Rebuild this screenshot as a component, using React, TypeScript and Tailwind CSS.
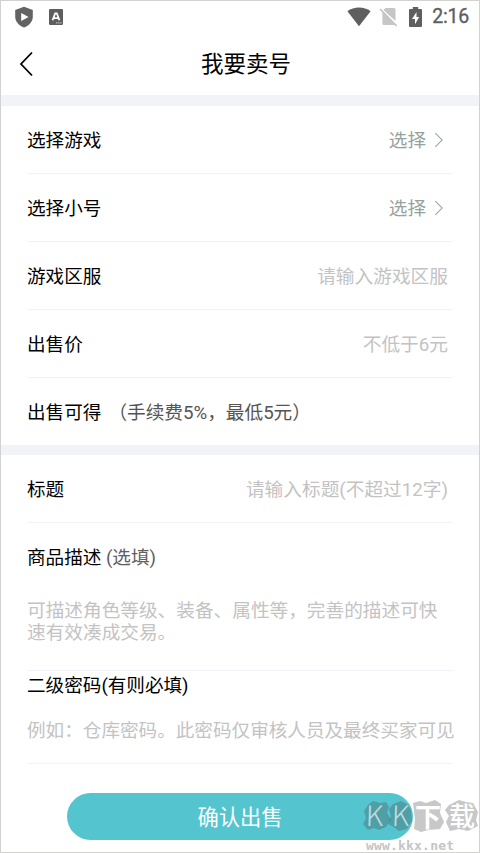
import React from "react";

function StatusBar() {
  return (
    <div className="flex h-[31px] shrink-0 items-center justify-between pl-[13px] pr-[10px] text-[#5f5f5f]">
      <div className="flex items-center gap-[15px]">
        <svg width="20" height="22" viewBox="0 0 20 22">
          <path d="M10 .8 18.8 4V10.5C18.8 15.7 15 19.8 10 21.5 5 19.8 1.2 15.7 1.2 10.5V4Z" fill="#636363" />
          <path d="M7.2 7v8l7.3-4Z" fill="#fff" />
        </svg>
        <svg width="14" height="16" viewBox="0 0 14 16">
          <rect width="14" height="16" rx="1.2" fill="#5e5e5e" />
          <path d="M3.6 11.3 6.2 4.3h1.6l2.6 7M4.6 9.2h4.8" fill="none" stroke="#fff" strokeWidth="1.8" />
          <path d="M7 13.9h6" stroke="#ccc" strokeWidth="1" strokeDasharray="1.5 .6" />
        </svg>
      </div>
      <div className="flex items-center">
        <svg width="24" height="20" viewBox="0 0 24 20">
          <path d="M.4 4.2C7-.6 17-.6 23.6 4.2L12 19.2Z" fill="#5f5f5f" />
        </svg>
        <svg className="ml-[8px]" width="19" height="20" viewBox="0 0 19 20">
          <path d="M6.5 1H15q1.5 0 1.5 1.5V14L4.4 2.9ZM3.4 5.2 16 18H5q-1.6 0-1.6-1.5Z" fill="#c6c6c6" />
          <path d="M1 2 17.7 19" stroke="#bcbcbc" strokeWidth="1.4" />
        </svg>
        <svg className="ml-[11px]" width="13" height="20" viewBox="0 0 13 20">
          <path d="M3.8 0h5.4v2H12q1 0 1 1v16q0 1-1 1H1q-1 0-1-1V3q0-1 1-1h2.8Z" fill="#5f5f5f" />
          <path d="M7.5 5 3 12h3v5.2L10.2 10H7.5Z" fill="#fff" />
        </svg>
        <span className="ml-[10px] text-[19.5px] leading-[22px] tracking-[-0.2px] [-webkit-text-stroke:0.35px_#5f5f5f]">2:16</span>
      </div>
    </div>
  );
}

function Row({ label, last, children }: { label: string; last?: boolean; children: React.ReactNode }) {
  return (
    <div className={`mx-[26px] flex h-[68px] items-center justify-between ${last ? "pt-px" : "border-b border-[#f2f2f8] pt-[2px]"}`}>
      <span className="whitespace-nowrap">{label}</span>
      {children}
    </div>
  );
}

function Choose() {
  return (
    <div className="flex items-center pr-[9px] text-[#95a39e]">
      <span>选择</span>
      <svg className="-mt-[2px] ml-[8px]" width="10" height="16" viewBox="0 0 10 16" fill="none">
        <path d="M1.3 1.2 8.2 8l-6.9 6.8" stroke="#9caba6" strokeWidth="1.1" />
      </svg>
    </div>
  );
}

function Hint({ children }: { children: React.ReactNode }) {
  return <span className="pr-[5px] text-[18.7px] whitespace-nowrap text-[#c3c3c3]">{children}</span>;
}

function Watermark() {
  return (
    <div className="pointer-events-none absolute -right-px -bottom-px h-[58px] w-[120px]">
      <svg width="120" height="58" viewBox="0 0 120 58">
        <g fill="#484848" fillOpacity=".3">
          <path d="M8 10 13 6 20 8 26 7 29 12 27 18 31 24 26 32 19 35 14 33 8 35 3 29 6 23 4 16Z" />
          <path d="M33 9 41 6 47 9 51 15 52 26 47 34 39 36 34 32 28 29 31 21 29 14Z" />
          <path d="M53 8 60 6 66 8 75 5 81 9 80 18 84 27 80 34 68 35 61 37 54 34 55 24Z" />
          <path d="M89 10 99 5 106 7 113 8 118 17 116 25 118 31 108 36 99 34 90 36 86 27 89 21 85 15Z" />
        </g>
        <g fill="#fff" fontFamily="'Noto Sans CJK SC', sans-serif">
          <text x="6.5" y="31" fontSize="28" fillOpacity=".65" fontWeight="300" transform="skewX(-2)">K</text>
          <text x="32.5" y="31" fontSize="28" fillOpacity=".65" fontWeight="300" transform="skewX(-2)">K</text>
          <text x="55" y="32" fontSize="26" fontWeight="700">下</text>
          <text x="89" y="31" fontSize="26" fontWeight="500">载</text>
        </g>
        <text x="6" y="55" fontSize="13" textLength="88" fontWeight="700" fontFamily="'DejaVu Sans Mono', monospace" fill="#c5c5c5">www.kkx.net</text>
      </svg>
    </div>
  );
}

export default function App() {
  return (
    <main className="relative flex h-[853px] w-[480px] flex-col overflow-hidden border border-[#d2d2d0] bg-white font-[Roboto,'Noto_Sans_CJK_SC',sans-serif] text-[18.6px] leading-[22px] text-black">
      <StatusBar />
      <header className="grid h-[63px] shrink-0 grid-cols-[60px_1fr_60px] items-center">
        <svg className="ml-[18px]" width="15" height="26" viewBox="0 0 15 26" fill="none">
          <path d="M13 1.5 2 13l11 11.5" stroke="#000" strokeWidth="1.8" />
        </svg>
        <h1 className="pl-[12px] text-center text-[22.5px] leading-[28px]">我要卖号</h1>
      </header>
      <div className="h-[11px] shrink-0 bg-[#f2f3f9]" />
      <section className="h-[339px] shrink-0">
        <Row label="选择游戏"><Choose /></Row>
        <Row label="选择小号"><Choose /></Row>
        <Row label="游戏区服"><Hint>请输入游戏区服</Hint></Row>
        <Row label="出售价"><Hint>不低于6元</Hint></Row>
        <Row label="出售可得" last>
          <span className="mr-auto ml-[7px] text-[18.67px] text-[#555]">（手续费5%，最低5元）</span>
        </Row>
      </section>
      <div className="h-[10px] shrink-0 bg-[#f2f3f9]" />
      <section className="flex shrink-0 flex-col">
        <Row label="标题"><Hint>请输入标题(不超过12字)</Hint></Row>
        <div className="mx-[26px] h-[148px] border-b border-[#f2f2f8] pt-[24px]">
          <p>商品描述 <span className="text-[#606060]">(选填)</span></p>
          <p className="mt-[31px] text-[18.67px] whitespace-nowrap text-[#c3c3c3]">可描述角色等级、装备、属性等，完善的描述可快<br />速有效凑成交易。</p>
        </div>
        <div className="mx-[26px] h-[93px] border-b border-[#f2f2f8] pt-[4px]">
          <p>二级密码(有则必填)</p>
          <p className="mt-[23px] whitespace-nowrap text-[#c3c3c3]">例如：仓库密码。此密码仅审核人员及最终买家可见</p>
        </div>
      </section>
      <button className="mt-[29px] ml-[66px] h-[47px] w-[346px] shrink-0 rounded-full bg-[#54c4ce] pt-[2px] text-[21.3px] leading-[28px] text-white">确认出售</button>
      <Watermark />
    </main>
  );
}
